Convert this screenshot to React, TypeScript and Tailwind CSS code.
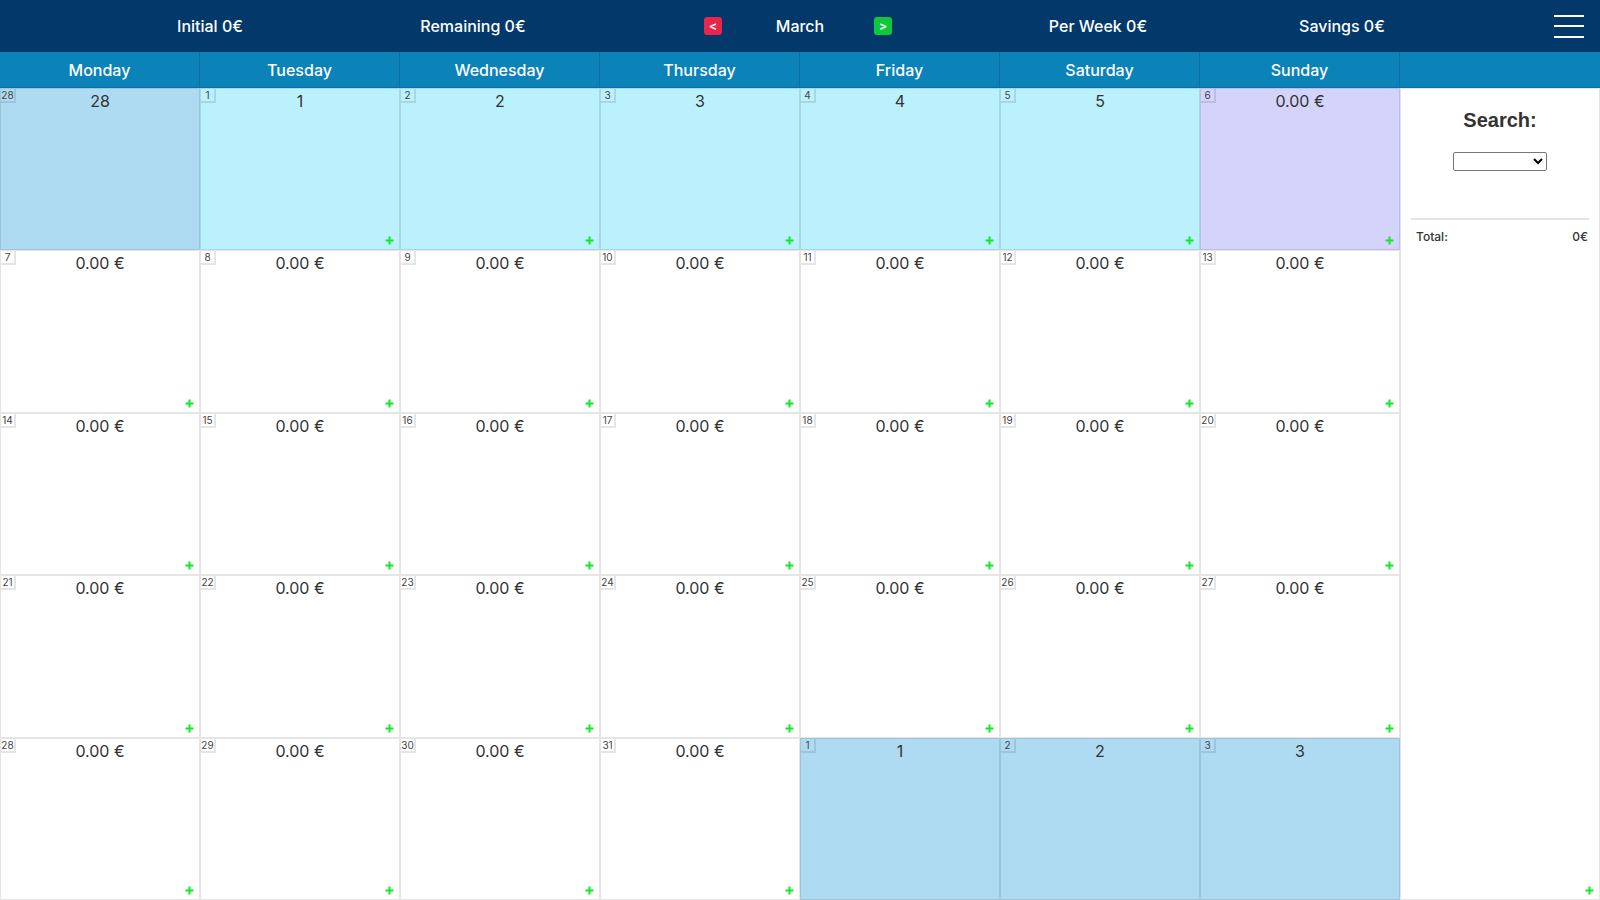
import React from "react";

type Cell = {
  n: number;
  label: string;
  bg: string;
  plus: boolean;
};

const WHITE = "bg-white";
const PREV = "bg-[#afdbf2]";
const CYAN = "bg-[#bbf0fd]";
const LAV = "bg-[#d3d3fb]";

function buildCells(): Cell[] {
  const cells: Cell[] = [];
  cells.push({ n: 28, label: "28", bg: PREV, plus: false });
  for (let d = 1; d <= 5; d++) cells.push({ n: d, label: String(d), bg: CYAN, plus: true });
  cells.push({ n: 6, label: "0.00 €", bg: LAV, plus: true });
  for (let d = 7; d <= 31; d++) cells.push({ n: d, label: "0.00 €", bg: WHITE, plus: true });
  for (let d = 1; d <= 3; d++) cells.push({ n: d, label: String(d), bg: PREV, plus: false });
  return cells;
}

const DAYS = ["Monday", "Tuesday", "Wednesday", "Thursday", "Friday", "Saturday", "Sunday"];

function Plus() {
  return (
    <svg width="9" height="9" viewBox="0 0 9 9" className="absolute right-[5px] bottom-[4px]">
      <rect x="3.5" y="0.5" width="2" height="8" fill="#12e82a" />
      <rect x="0.5" y="3.5" width="8" height="2" fill="#12e82a" />
    </svg>
  );
}

export default function App() {
  const cells = buildCells();
  return (
    <div className="w-[1600px] h-[900px] flex flex-col overflow-hidden bg-white font-['Inter',sans-serif]">
      {/* Top bar */}
      <div className="h-[52px] shrink-0 bg-[#02386a] flex items-center text-white text-[16px] font-medium">
        <div className="ml-[150px] w-[120px] text-center">Initial 0€</div>
        <div className="ml-[133px] w-[140px] text-center">Remaining 0€</div>
        <button className="ml-[161px] w-[18px] h-[18px] rounded-[3px] bg-[#e8254a] text-white text-[12px] font-bold leading-[18px] flex items-center justify-center">
          &lt;
        </button>
        <div className="ml-[38px] w-[80px] text-center">March</div>
        <button className="ml-[34px] w-[18px] h-[18px] rounded-[3px] bg-[#0dc83c] text-white text-[12px] font-bold leading-[18px] flex items-center justify-center">
          &gt;
        </button>
        <div className="ml-[141px] w-[130px] text-center">Per Week 0€</div>
        <div className="ml-[119px] w-[120px] text-center">Savings 0€</div>
        <div className="ml-[152px] w-[30px] flex flex-col gap-[8.5px]">
          <span className="block h-[2px] bg-white" />
          <span className="block h-[2px] bg-white" />
          <span className="block h-[2px] bg-white" />
        </div>
      </div>

      {/* Day header row */}
      <div className="h-[36px] shrink-0 bg-[#0b82b8] grid grid-cols-[repeat(7,200px)_200px] text-white text-[16px] font-medium">
        {DAYS.map((d) => (
          <div key={d} className="flex items-center justify-center border-r border-b border-[#0a6f9e]">
            {d}
          </div>
        ))}
        <div className="border-b border-[#0a6f9e]" />
      </div>

      {/* Body */}
      <div className="flex-1 flex min-h-0">
        <div className="w-[1400px] grid grid-cols-7 grid-rows-5">
          {cells.map((c, i) => (
            <div key={i} className={`relative border border-black/10 ${c.bg}`}>
              <div className="absolute left-0 top-0 w-[15px] h-[14px] border-r-2 border-b-2 border-black/10 text-[10px] leading-[12px] text-center text-[#444]">
                {c.n}
              </div>
              <div className="pt-[2px] text-center text-[16px] leading-[21px] text-[#333]">{c.label}</div>
              {c.plus && <Plus />}
            </div>
          ))}
        </div>
        <div className="w-[200px] relative border border-black/10 flex flex-col items-stretch px-[10px]">
          <div className="mt-[19px] text-center text-[20px] font-bold text-[#333] font-['Liberation_Sans',Arial,sans-serif] leading-[24px]">
            Search:
          </div>
          <div className="mt-[20px] flex justify-center">
            <select className="w-[94px] h-[19px] border border-[#767676] rounded-[2px] bg-white text-[12px]">
              <option></option>
            </select>
          </div>
          <div className="mt-[47px] h-[2px] bg-[#e4e4e4]" />
          <div className="mt-[8px] flex justify-between pl-[5px] pr-[1px] text-[12px] font-medium text-[#333]">
            <span>Total:</span>
            <span>0€</span>
          </div>
          <Plus />
        </div>
      </div>
    </div>
  );
}
